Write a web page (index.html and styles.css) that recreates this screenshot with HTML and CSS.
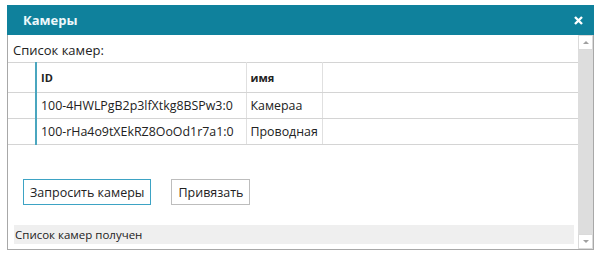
FILE: index.html
```html
<!DOCTYPE html>
<html lang="ru">
  <head>
    <meta charset="UTF-8" />
    <title>Камеры</title>
    <link rel="stylesheet" href="styles.css">
  </head>
  <body>
    <div class="dialog">
      <div class="dialog-title">
        <span>Камеры</span>
        <svg class="close" width="9" height="9" viewBox="0 0 9 9">
          <path d="M1 1 L8 8 M8 1 L1 8" stroke="#fff" stroke-width="2.4" />
        </svg>
      </div>
      <div class="dialog-frame">
        <div class="dialog-content">
          <div class="list-label">Список камер:</div>
          <table class="cam-table">
            <thead>
              <tr>
                <th class="col-sel"></th>
                <th class="col-id">ID</th>
                <th class="col-name">имя</th>
                <th></th>
              </tr>
            </thead>
            <tbody>
              <tr>
                <td class="col-sel"></td>
                <td>100-4HWLPgB2p3lfXtkg8BSPw3:0</td>
                <td>Камераа</td>
                <td></td>
              </tr>
              <tr>
                <td class="col-sel"></td>
                <td>100-rHa4o9tXEkRZ8OoOd1r7a1:0</td>
                <td>Проводная</td>
                <td></td>
              </tr>
            </tbody>
          </table>
          <div class="actions">
            <button class="btn btn-focus">Запросить камеры</button>
            <button class="btn">Привязать</button>
          </div>
          <div class="status">Список камер получен</div>
        </div>
        <div class="scrollbar">
          <div class="scroll-btn"><span class="arrow-up"></span></div>
          <div class="scroll-track"></div>
          <div class="scroll-btn"><span class="arrow-down"></span></div>
        </div>
      </div>
    </div>
  </body>
</html>
```

FILE: styles.css
```css
* {
  margin: 0;
  padding: 0;
  box-sizing: border-box;
}

body {
  font-family: "Open Sans", "Noto Sans", sans-serif;
  font-size: 12px;
  color: #222;
  background: #fff;
  padding: 5px 0 0 7px;
}

.dialog {
  width: 587px;
}

.dialog-title {
  height: 30px;
  background-color: #0f819c;
  color: #eef8fb;
  font-weight: bold;
  font-size: 13px;
  display: flex;
  align-items: center;
  justify-content: space-between;
  padding: 0 11px 0 16px;
}

.dialog-frame {
  height: 215px;
  border: 1px solid #a8a8a8;
  border-top: none;
  display: flex;
}

.dialog-content {
  flex: 1;
  display: flex;
  flex-direction: column;
}

.list-label {
  height: 27px;
  padding: 6px 0 0 5px;
  font-size: 13px;
}

.cam-table {
  width: 100%;
  border-collapse: collapse;
  font-size: 12.4px;
}

.cam-table th,
.cam-table td {
  border-top: 1px solid #d4d4d4;
  border-bottom: 1px solid #d4d4d4;
  border-right: 1px solid #e0e0e0;
  text-align: left;
  padding: 0 4px;
  white-space: nowrap;
}

.cam-table th {
  height: 30px;
  font-size: 11px;
  font-weight: bold;
}

.cam-table td {
  height: 26px;
}

.cam-table th:last-child,
.cam-table td:last-child {
  border-right: none;
}

.cam-table .col-sel {
  width: 28px;
  border-right: 2px solid #4aa6bf;
}

.cam-table .col-id {
  width: 210px;
}

.cam-table .col-name {
  width: 73px;
}

.actions {
  display: flex;
  gap: 20px;
  padding: 34px 0 0 15px;
  height: 80px;
  align-items: flex-start;
}

.btn {
  font-family: inherit;
  font-size: 12.5px;
  color: #222;
  background: #fff;
  border: 1px solid #bdbdbd;
  height: 26px;
  padding: 0 6px;
}

.btn-focus {
  border-color: #3da3c4;
}

.status {
  margin: 0 4px 0 6px;
  height: 19px;
  background: #efefef;
  font-size: 11.5px;
  padding: 2px 0 0 1px;
}

.scrollbar {
  width: 15px;
  display: flex;
  flex-direction: column;
  background: #dddddd;
}

.scroll-btn {
  height: 15px;
  background: #fff;
  border: 1px solid #dadada;
  display: flex;
  align-items: center;
  justify-content: center;
}

.scroll-track {
  flex: 1;
}

.arrow-up,
.arrow-down {
  width: 0;
  height: 0;
  border-left: 3px solid transparent;
  border-right: 3px solid transparent;
}

.arrow-up {
  border-bottom: 3px solid #a0a0a0;
}

.arrow-down {
  border-top: 3px solid #a0a0a0;
}
```
